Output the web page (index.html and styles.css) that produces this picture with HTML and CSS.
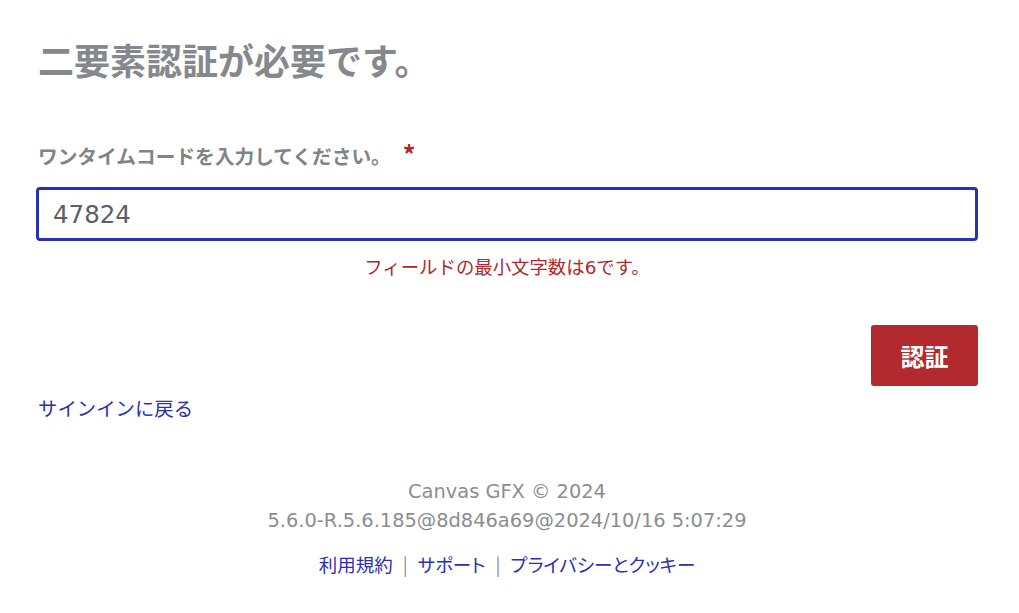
FILE: index.html
```html
<!DOCTYPE html>
<html lang="ja">
<head>
<meta charset="utf-8">
<title>二要素認証</title>
<link rel="stylesheet" href="styles.css">
</head>
<body>
<main class="page">
  <h1 class="title">二要素認証が必要です。</h1>
  <form class="form">
    <label class="label" for="code">ワンタイムコードを入力してください。<span class="req">*</span></label>
    <input id="code" class="input" type="text" value="47824">
    <p class="error">フィールドの最小文字数は6です。</p>
    <div class="actions">
      <button type="button" class="btn">認証</button>
    </div>
  </form>
  <a class="back" href="#">サインインに戻る</a>
  <footer class="footer">
    <p class="copy">Canvas GFX © 2024</p>
    <p class="copy">5.6.0-R.5.6.185@8d846a69@2024/10/16 5:07:29</p>
    <p class="links"><a href="#">利用規約</a><span class="sep">|</span><a href="#">サポート</a><span class="sep">|</span><a href="#">プライバシーとクッキー</a></p>
  </footer>
</main>
</body>
</html>
```

FILE: styles.css
```css
* { box-sizing: border-box; }
html, body { margin: 0; padding: 0; background: #ffffff; }
body {
  font-family: "DejaVu Sans", "Noto Sans CJK JP", sans-serif;
  color: #5a6068;
}
.page {
  width: 942px;
  margin-left: 36px;
  display: flex;
  flex-direction: column;
}
.title {
  margin: 36px 0 0 2px;
  font-family: "Noto Sans CJK JP", sans-serif;
  font-size: 36px;
  line-height: 46px;
  font-weight: 700;
  color: #85888c;
}
.form { display: flex; flex-direction: column; }
.label {
  margin: 58px 0 0 2px;
  font-family: "Noto Sans CJK JP", sans-serif;
  font-size: 19.7px;
  line-height: 26px;
  font-weight: 700;
  color: #818487;
}
.req {
  color: #b0272d;
  font-size: 25px;
  margin-left: 12px;
}
.input {
  margin-top: 18px;
  height: 54px;
  width: 100%;
  border: 3px solid #2a2fb8;
  border-radius: 4px;
  padding: 0 14px;
  font-family: "DejaVu Sans", sans-serif;
  font-size: 24.5px;
  color: #5a6068;
  outline: none;
}
.error {
  margin: 15px 0 0;
  text-align: center;
  font-family: "DejaVu Sans", "Noto Sans CJK JP", sans-serif;
  font-size: 18.4px;
  line-height: 24px;
  color: #b0272d;
}
.actions {
  margin-top: 45px;
  display: flex;
  justify-content: flex-end;
}
.btn {
  width: 107px;
  height: 61px;
  border: none;
  border-radius: 3px;
  background: #b2292e;
  color: #ffffff;
  font-family: "Noto Sans CJK JP", sans-serif;
  font-size: 24px;
  font-weight: 700;
}
.back {
  margin: 8px 0 0 2px;
  align-self: flex-start;
  font-family: "Noto Sans CJK JP", sans-serif;
  font-size: 19.4px;
  line-height: 28px;
  color: #2a2fb8;
  text-decoration: none;
}
.footer {
  margin-top: 55px;
  text-align: center;
}
.copy {
  margin: 0;
  font-size: 19.4px;
  line-height: 29px;
  color: #8a8e92;
}
.links {
  margin: 15px 0 0;
  font-family: "Noto Sans CJK JP", sans-serif;
  font-size: 18.5px;
  line-height: 28px;
  font-feature-settings: "palt";
}
.links a { color: #2a2fb8; text-decoration: none; }
.sep { color: #8a8e92; margin: 0 10px; }
```
